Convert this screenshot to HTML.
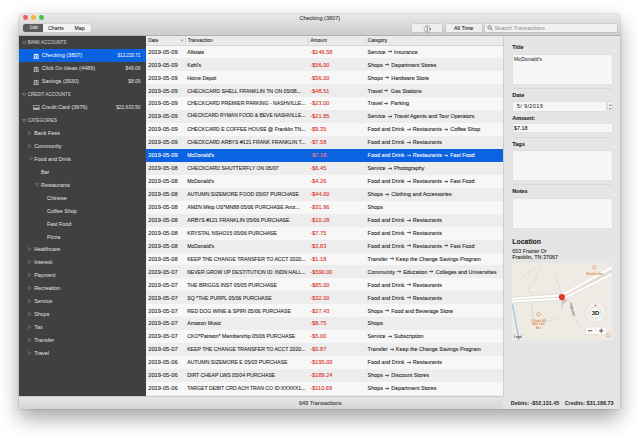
<!DOCTYPE html><html><head><meta charset="utf-8"><style>
*{margin:0;padding:0;box-sizing:border-box}
html,body{width:637px;height:436px;overflow:hidden;background:#fff;font-family:"Liberation Sans",sans-serif}
.tx{position:absolute;white-space:nowrap;line-height:10px;height:10px;-webkit-text-stroke:0.08px currentColor}
.bx{position:absolute}
</style></head><body>
<div class="bx" style="left:19.00px;top:14.00px;width:601.00px;height:394.60px;background:#ececec;border-radius:2.5px 2.5px 1px 1px;box-shadow:0 9px 20px rgba(0,0,0,.36),0 0 1.5px rgba(0,0,0,.35)"></div>
<div class="bx" style="left:19.00px;top:14.00px;width:601.00px;height:21.50px;background:linear-gradient(#e8e8e8,#cdcdcd);border-radius:2.5px 2.5px 0 0;border-bottom:1px solid #b0b0b0"></div>
<div class="bx" style="left:22.90px;top:15.20px;width:4.80px;height:4.80px;background:#ec5f56;border-radius:50%"></div>
<div class="bx" style="left:30.90px;top:15.20px;width:4.80px;height:4.80px;background:#f0b63b;border-radius:50%"></div>
<div class="bx" style="left:39.10px;top:15.20px;width:4.80px;height:4.80px;background:#43c043;border-radius:50%"></div>
<div class="bx" style="left:22.80px;top:23.60px;width:68.20px;height:8.90px;background:#f3f3f3;border-radius:2px;box-shadow:0 0 0 0.5px #c8c8c8"></div>
<div class="bx" style="left:22.80px;top:23.60px;width:20.20px;height:8.90px;background:#5c5c5c;border-radius:2px 0 0 2px"></div>
<div class="tx" style="left:29.90px;top:23.30px;font-size:4.9px;color:#f0f0f0;font-weight:400;">List</div>
<div class="tx" style="left:47.90px;top:23.30px;font-size:5.4px;color:#2a2a2a;font-weight:400;">Charts</div>
<div class="tx" style="left:74.50px;top:23.30px;font-size:5.15px;color:#2a2a2a;font-weight:400;">Map</div>
<div class="tx" style="left:299.40px;top:13.10px;font-size:5.56px;color:#3a3a3a;font-weight:400;">Checking (3807)</div>
<div class="bx" style="left:412.00px;top:24.00px;width:30.40px;height:7.90px;background:#efefef;border-radius:1px;box-shadow:0 0 0 0.4px rgba(0,0,0,.12)"></div>
<svg style="position:absolute;left:423px;top:24.5px" width="9" height="8" viewBox="0 0 9 8"><circle cx="4.2" cy="3.9" r="3.1" fill="none" stroke="#444" stroke-width="0.6" stroke-dasharray="1.2 0.6"/><line x1="4.2" y1="1.5" x2="4.2" y2="6.3" stroke="#444" stroke-width="0.6"/><circle cx="7.2" cy="3.9" r="0.6" fill="#444"/></svg>
<div class="bx" style="left:446.10px;top:24.00px;width:35.80px;height:7.90px;background:#efefef;border-radius:1px;box-shadow:0 0 0 0.4px rgba(0,0,0,.12)"></div>
<div class="tx" style="left:454.00px;top:23.20px;font-size:5.4px;color:#222;font-weight:400;">All Time</div>
<div class="bx" style="left:485.30px;top:24.00px;width:131.70px;height:8.00px;background:#f1f1f1;border-radius:1px;box-shadow:0 0 0 0.4px rgba(0,0,0,.15)"></div>
<div class="tx" style="left:494.40px;top:23.20px;font-size:5.55px;color:#a2a2a2;font-weight:400;">Search Transactions</div>
<svg style="position:absolute;left:486.6px;top:25.4px" width="6" height="6" viewBox="0 0 6 6"><circle cx="2.5" cy="2.4" r="1.65" fill="none" stroke="#444" stroke-width="0.65"/><line x1="3.7" y1="3.6" x2="5.4" y2="5.2" stroke="#444" stroke-width="0.8"/></svg>
<div class="bx" style="left:19.00px;top:35.50px;width:127.00px;height:360.50px;background:#404040;"></div>
<svg style="position:absolute;left:21.6px;top:41.20px" width="4.4" height="3.8" viewBox="0 0 4.4 3.8"><path d="M0.35 0.35 L4.05 0.35 L2.2 3.4 Z" fill="none" stroke="#9a9a9a" stroke-width="0.55"/></svg>
<div class="tx" style="left:27.80px;top:38.20px;font-size:4.45px;color:#c8c8c8;font-weight:400;letter-spacing:0.05px">BANK ACCOUNTS</div>
<div class="bx" style="left:19.00px;top:49.14px;width:127.00px;height:12.70px;background:#0b63e1;"></div>
<svg style="position:absolute;left:32.9px;top:52.74px" width="6.4" height="6" viewBox="0 0 6.4 6"><path d="M0.4 1.9 Q3.2 -0.6 6 1.9 Z" fill="#e8eefc"/><rect x="0.9" y="2.1" width="1.1" height="2.6" fill="#e8eefc"/><rect x="2.65" y="2.1" width="1.1" height="2.6" fill="#e8eefc"/><rect x="4.4" y="2.1" width="1.1" height="2.6" fill="#e8eefc"/><rect x="0.3" y="4.8" width="5.8" height="1" fill="#e8eefc"/></svg>
<div class="tx" style="left:41.80px;top:50.34px;font-size:5.5px;color:#ffffff;font-weight:400;-webkit-text-stroke:0">Checking (3807)</div>
<div class="tx" style="right:496.60px;top:51.04px;font-size:4.6px;color:#ffffff;-webkit-text-stroke:0">$13,220.71</div>
<svg style="position:absolute;left:32.9px;top:65.68px" width="6.4" height="6" viewBox="0 0 6.4 6"><path d="M0.4 1.9 Q3.2 -0.6 6 1.9 Z" fill="#b4b4b4"/><rect x="0.9" y="2.1" width="1.1" height="2.6" fill="#b4b4b4"/><rect x="2.65" y="2.1" width="1.1" height="2.6" fill="#b4b4b4"/><rect x="4.4" y="2.1" width="1.1" height="2.6" fill="#b4b4b4"/><rect x="0.3" y="4.8" width="5.8" height="1" fill="#b4b4b4"/></svg>
<div class="tx" style="left:41.80px;top:63.28px;font-size:5.5px;color:#e2e2e2;font-weight:400;-webkit-text-stroke:0">Click On Ideas (4489)</div>
<div class="tx" style="right:496.60px;top:63.98px;font-size:4.85px;color:#e2e2e2;-webkit-text-stroke:0">$49.06</div>
<svg style="position:absolute;left:32.9px;top:78.62px" width="6.4" height="6" viewBox="0 0 6.4 6"><path d="M0.4 1.9 Q3.2 -0.6 6 1.9 Z" fill="#b4b4b4"/><rect x="0.9" y="2.1" width="1.1" height="2.6" fill="#b4b4b4"/><rect x="2.65" y="2.1" width="1.1" height="2.6" fill="#b4b4b4"/><rect x="4.4" y="2.1" width="1.1" height="2.6" fill="#b4b4b4"/><rect x="0.3" y="4.8" width="5.8" height="1" fill="#b4b4b4"/></svg>
<div class="tx" style="left:41.80px;top:76.22px;font-size:5.5px;color:#e2e2e2;font-weight:400;-webkit-text-stroke:0">Savings (3930)</div>
<div class="tx" style="right:496.60px;top:76.92px;font-size:4.85px;color:#e2e2e2;-webkit-text-stroke:0">$8.09</div>
<svg style="position:absolute;left:21.6px;top:92.96px" width="4.4" height="3.8" viewBox="0 0 4.4 3.8"><path d="M0.35 0.35 L4.05 0.35 L2.2 3.4 Z" fill="none" stroke="#9a9a9a" stroke-width="0.55"/></svg>
<div class="tx" style="left:27.80px;top:89.96px;font-size:4.45px;color:#c8c8c8;font-weight:400;letter-spacing:0.05px">CREDIT ACCOUNTS</div>
<svg style="position:absolute;left:33px;top:104.50px" width="6.5" height="5" viewBox="0 0 6.5 5"><rect x="0.35" y="0.35" width="5.8" height="4.3" fill="none" stroke="#b4b4b4" stroke-width="0.7"/><rect x="0.35" y="2.6" width="5.8" height="2" fill="#b4b4b4"/></svg>
<div class="tx" style="left:41.80px;top:102.10px;font-size:5.5px;color:#e2e2e2;font-weight:400;-webkit-text-stroke:0">Credit Card (3976)</div>
<div class="tx" style="right:496.60px;top:102.80px;font-size:4.85px;color:#e2e2e2;-webkit-text-stroke:0">$22,633.50</div>
<svg style="position:absolute;left:21.6px;top:118.84px" width="4.4" height="3.8" viewBox="0 0 4.4 3.8"><path d="M0.35 0.35 L4.05 0.35 L2.2 3.4 Z" fill="none" stroke="#9a9a9a" stroke-width="0.55"/></svg>
<div class="tx" style="left:27.80px;top:115.84px;font-size:4.45px;color:#c8c8c8;font-weight:400;letter-spacing:0.05px">CATEGORIES</div>
<svg style="position:absolute;left:28.20px;top:130.98px" width="3.5" height="4" viewBox="0 0 3.5 4"><path d="M0.3 0.3 L3.2 2 L0.3 3.7 Z" fill="none" stroke="#8a8a8a" stroke-width="0.5"/></svg>
<div class="tx" style="left:34.20px;top:127.98px;font-size:5.4px;color:#e2e2e2;font-weight:400;-webkit-text-stroke:0">Bank Fees</div>
<svg style="position:absolute;left:28.20px;top:143.92px" width="3.5" height="4" viewBox="0 0 3.5 4"><path d="M0.3 0.3 L3.2 2 L0.3 3.7 Z" fill="none" stroke="#8a8a8a" stroke-width="0.5"/></svg>
<div class="tx" style="left:34.20px;top:140.92px;font-size:5.4px;color:#e2e2e2;font-weight:400;-webkit-text-stroke:0">Community</div>
<svg style="position:absolute;left:28.60px;top:157.26px" width="4" height="3.5" viewBox="0 0 4 3.5"><path d="M0.3 0.3 L3.7 0.3 L2 3.2 Z" fill="none" stroke="#8a8a8a" stroke-width="0.5"/></svg>
<div class="tx" style="left:34.20px;top:153.86px;font-size:5.4px;color:#e2e2e2;font-weight:400;-webkit-text-stroke:0">Food and Drink</div>
<div class="tx" style="left:41.00px;top:166.80px;font-size:5.4px;color:#e2e2e2;font-weight:400;-webkit-text-stroke:0">Bar</div>
<svg style="position:absolute;left:35.40px;top:183.14px" width="4" height="3.5" viewBox="0 0 4 3.5"><path d="M0.3 0.3 L3.7 0.3 L2 3.2 Z" fill="none" stroke="#8a8a8a" stroke-width="0.5"/></svg>
<div class="tx" style="left:41.00px;top:179.74px;font-size:5.4px;color:#e2e2e2;font-weight:400;-webkit-text-stroke:0">Restaurants</div>
<div class="tx" style="left:47.00px;top:192.68px;font-size:5.4px;color:#e2e2e2;font-weight:400;-webkit-text-stroke:0">Chinese</div>
<div class="tx" style="left:47.00px;top:205.62px;font-size:5.4px;color:#e2e2e2;font-weight:400;-webkit-text-stroke:0">Coffee Shop</div>
<div class="tx" style="left:47.00px;top:218.56px;font-size:5.4px;color:#e2e2e2;font-weight:400;-webkit-text-stroke:0">Fast Food</div>
<div class="tx" style="left:47.00px;top:231.50px;font-size:5.4px;color:#e2e2e2;font-weight:400;-webkit-text-stroke:0">Pizza</div>
<svg style="position:absolute;left:28.20px;top:247.44px" width="3.5" height="4" viewBox="0 0 3.5 4"><path d="M0.3 0.3 L3.2 2 L0.3 3.7 Z" fill="none" stroke="#8a8a8a" stroke-width="0.5"/></svg>
<div class="tx" style="left:34.20px;top:244.44px;font-size:5.4px;color:#e2e2e2;font-weight:400;-webkit-text-stroke:0">Healthcare</div>
<svg style="position:absolute;left:28.20px;top:260.38px" width="3.5" height="4" viewBox="0 0 3.5 4"><path d="M0.3 0.3 L3.2 2 L0.3 3.7 Z" fill="none" stroke="#8a8a8a" stroke-width="0.5"/></svg>
<div class="tx" style="left:34.20px;top:257.38px;font-size:5.4px;color:#e2e2e2;font-weight:400;-webkit-text-stroke:0">Interest</div>
<svg style="position:absolute;left:28.20px;top:273.32px" width="3.5" height="4" viewBox="0 0 3.5 4"><path d="M0.3 0.3 L3.2 2 L0.3 3.7 Z" fill="none" stroke="#8a8a8a" stroke-width="0.5"/></svg>
<div class="tx" style="left:34.20px;top:270.32px;font-size:5.4px;color:#e2e2e2;font-weight:400;-webkit-text-stroke:0">Payment</div>
<svg style="position:absolute;left:28.20px;top:286.26px" width="3.5" height="4" viewBox="0 0 3.5 4"><path d="M0.3 0.3 L3.2 2 L0.3 3.7 Z" fill="none" stroke="#8a8a8a" stroke-width="0.5"/></svg>
<div class="tx" style="left:34.20px;top:283.26px;font-size:5.4px;color:#e2e2e2;font-weight:400;-webkit-text-stroke:0">Recreation</div>
<svg style="position:absolute;left:28.20px;top:299.20px" width="3.5" height="4" viewBox="0 0 3.5 4"><path d="M0.3 0.3 L3.2 2 L0.3 3.7 Z" fill="none" stroke="#8a8a8a" stroke-width="0.5"/></svg>
<div class="tx" style="left:34.20px;top:296.20px;font-size:5.4px;color:#e2e2e2;font-weight:400;-webkit-text-stroke:0">Service</div>
<svg style="position:absolute;left:28.20px;top:312.14px" width="3.5" height="4" viewBox="0 0 3.5 4"><path d="M0.3 0.3 L3.2 2 L0.3 3.7 Z" fill="none" stroke="#8a8a8a" stroke-width="0.5"/></svg>
<div class="tx" style="left:34.20px;top:309.14px;font-size:5.4px;color:#e2e2e2;font-weight:400;-webkit-text-stroke:0">Shops</div>
<svg style="position:absolute;left:28.20px;top:325.08px" width="3.5" height="4" viewBox="0 0 3.5 4"><path d="M0.3 0.3 L3.2 2 L0.3 3.7 Z" fill="none" stroke="#8a8a8a" stroke-width="0.5"/></svg>
<div class="tx" style="left:34.20px;top:322.08px;font-size:5.4px;color:#e2e2e2;font-weight:400;-webkit-text-stroke:0">Tax</div>
<svg style="position:absolute;left:28.20px;top:338.02px" width="3.5" height="4" viewBox="0 0 3.5 4"><path d="M0.3 0.3 L3.2 2 L0.3 3.7 Z" fill="none" stroke="#8a8a8a" stroke-width="0.5"/></svg>
<div class="tx" style="left:34.20px;top:335.02px;font-size:5.4px;color:#e2e2e2;font-weight:400;-webkit-text-stroke:0">Transfer</div>
<svg style="position:absolute;left:28.20px;top:350.96px" width="3.5" height="4" viewBox="0 0 3.5 4"><path d="M0.3 0.3 L3.2 2 L0.3 3.7 Z" fill="none" stroke="#8a8a8a" stroke-width="0.5"/></svg>
<div class="tx" style="left:34.20px;top:347.96px;font-size:5.4px;color:#e2e2e2;font-weight:400;-webkit-text-stroke:0">Travel</div>
<div class="bx" style="left:146.00px;top:35.50px;width:357.00px;height:360.50px;background:#f7f7f7;"></div>
<div class="bx" style="left:146.00px;top:35.50px;width:357.00px;height:10.00px;background:#eaeaea;border-bottom:0.6px solid #d6d6d6"></div>
<div class="bx" style="left:185.30px;top:37.00px;width:0.60px;height:7.00px;background:#d2d2d2;"></div>
<div class="bx" style="left:307.90px;top:37.00px;width:0.60px;height:7.00px;background:#d2d2d2;"></div>
<div class="bx" style="left:365.20px;top:37.00px;width:0.60px;height:7.00px;background:#dedede;"></div>
<div class="tx" style="left:148.20px;top:35.50px;font-size:4.8px;color:#2a2a2a;font-weight:400;">Date</div>
<svg style="position:absolute;left:180px;top:39.4px" width="4" height="3" viewBox="0 0 4 3"><path d="M0.4 0.5 L2 2.3 L3.6 0.5" fill="none" stroke="#777" stroke-width="0.6"/></svg>
<div class="tx" style="left:187.70px;top:35.50px;font-size:4.8px;color:#2a2a2a;font-weight:400;">Transaction</div>
<div class="tx" style="left:310.40px;top:35.50px;font-size:4.8px;color:#2a2a2a;font-weight:400;">Amount</div>
<div class="tx" style="left:367.70px;top:35.50px;font-size:4.8px;color:#2a2a2a;font-weight:400;">Category</div>
<div class="tx" style="left:148.20px;top:46.70px;font-size:5.75px;color:#222;font-weight:400;">2019-05-09</div>
<div class="tx" style="left:187.20px;top:46.70px;font-size:5.2px;color:#222;font-weight:400;">Allstate</div>
<div class="tx" style="left:310.40px;top:46.70px;font-size:5.6px;color:#d92b24;font-weight:400;">-$146.58</div>
<div class="tx" style="left:367.60px;top:46.70px;font-size:5.4px;color:#222;font-weight:400;">Service<svg width="4.4" height="3" viewBox="0 0 4.4 3" style="margin:0 1.9px 0 2.1px;vertical-align:0.4px"><path d="M0 1.5H3.7M2.5 0.35L3.85 1.5L2.5 2.65" stroke="currentColor" stroke-width="0.65" fill="none"/></svg>Insurance</div>
<div class="bx" style="left:146.00px;top:58.44px;width:357.00px;height:12.94px;background:#ededed;"></div>
<div class="tx" style="left:148.20px;top:59.64px;font-size:5.75px;color:#222;font-weight:400;">2019-05-09</div>
<div class="tx" style="left:187.20px;top:59.64px;font-size:5.2px;color:#222;font-weight:400;">Kohl's</div>
<div class="tx" style="left:310.40px;top:59.64px;font-size:5.6px;color:#d92b24;font-weight:400;">-$56.00</div>
<div class="tx" style="left:367.60px;top:59.64px;font-size:5.4px;color:#222;font-weight:400;">Shops<svg width="4.4" height="3" viewBox="0 0 4.4 3" style="margin:0 1.9px 0 2.1px;vertical-align:0.4px"><path d="M0 1.5H3.7M2.5 0.35L3.85 1.5L2.5 2.65" stroke="currentColor" stroke-width="0.65" fill="none"/></svg>Department Stores</div>
<div class="tx" style="left:148.20px;top:72.58px;font-size:5.75px;color:#222;font-weight:400;">2019-05-09</div>
<div class="tx" style="left:187.20px;top:72.58px;font-size:5.2px;color:#222;font-weight:400;">Home Depot</div>
<div class="tx" style="left:310.40px;top:72.58px;font-size:5.6px;color:#d92b24;font-weight:400;">-$56.00</div>
<div class="tx" style="left:367.60px;top:72.58px;font-size:5.4px;color:#222;font-weight:400;">Shops<svg width="4.4" height="3" viewBox="0 0 4.4 3" style="margin:0 1.9px 0 2.1px;vertical-align:0.4px"><path d="M0 1.5H3.7M2.5 0.35L3.85 1.5L2.5 2.65" stroke="currentColor" stroke-width="0.65" fill="none"/></svg>Hardware Store</div>
<div class="bx" style="left:146.00px;top:84.32px;width:357.00px;height:12.94px;background:#ededed;"></div>
<div class="tx" style="left:148.20px;top:85.52px;font-size:5.75px;color:#222;font-weight:400;">2019-05-09</div>
<div class="tx" style="left:187.20px;top:85.52px;font-size:5.2px;color:#222;font-weight:400;">CHECKCARD SHELL FRANKLIN TN ON 05/08...</div>
<div class="tx" style="left:310.40px;top:85.52px;font-size:5.6px;color:#d92b24;font-weight:400;">-$48.51</div>
<div class="tx" style="left:367.60px;top:85.52px;font-size:5.4px;color:#222;font-weight:400;">Travel<svg width="4.4" height="3" viewBox="0 0 4.4 3" style="margin:0 1.9px 0 2.1px;vertical-align:0.4px"><path d="M0 1.5H3.7M2.5 0.35L3.85 1.5L2.5 2.65" stroke="currentColor" stroke-width="0.65" fill="none"/></svg>Gas Stations</div>
<div class="tx" style="left:148.20px;top:98.46px;font-size:5.75px;color:#222;font-weight:400;">2019-05-09</div>
<div class="tx" style="left:187.20px;top:98.46px;font-size:5.130536433303026px;color:#222;font-weight:400;">CHECKCARD PREMIER PARKING - NASHVILLE...</div>
<div class="tx" style="left:310.40px;top:98.46px;font-size:5.6px;color:#d92b24;font-weight:400;">-$23.00</div>
<div class="tx" style="left:367.60px;top:98.46px;font-size:5.4px;color:#222;font-weight:400;">Travel<svg width="4.4" height="3" viewBox="0 0 4.4 3" style="margin:0 1.9px 0 2.1px;vertical-align:0.4px"><path d="M0 1.5H3.7M2.5 0.35L3.85 1.5L2.5 2.65" stroke="currentColor" stroke-width="0.65" fill="none"/></svg>Parking</div>
<div class="bx" style="left:146.00px;top:110.20px;width:357.00px;height:12.94px;background:#ededed;"></div>
<div class="tx" style="left:148.20px;top:111.40px;font-size:5.75px;color:#222;font-weight:400;">2019-05-09</div>
<div class="tx" style="left:187.20px;top:111.40px;font-size:4.963142905009214px;color:#222;font-weight:400;">CHECKCARD RYMAN FOOD & BEVE NASHVILLE...</div>
<div class="tx" style="left:310.40px;top:111.40px;font-size:5.6px;color:#d92b24;font-weight:400;">-$21.85</div>
<div class="tx" style="left:367.60px;top:111.40px;font-size:5.4px;color:#222;font-weight:400;">Service<svg width="4.4" height="3" viewBox="0 0 4.4 3" style="margin:0 1.9px 0 2.1px;vertical-align:0.4px"><path d="M0 1.5H3.7M2.5 0.35L3.85 1.5L2.5 2.65" stroke="currentColor" stroke-width="0.65" fill="none"/></svg>Travel Agents and Tour Operators</div>
<div class="tx" style="left:148.20px;top:124.34px;font-size:5.75px;color:#222;font-weight:400;">2019-05-09</div>
<div class="tx" style="left:187.20px;top:124.34px;font-size:5.1521739130434785px;color:#222;font-weight:400;">CHECKCARD E COFFEE HOUSE @ Franklin TN...</div>
<div class="tx" style="left:310.40px;top:124.34px;font-size:5.6px;color:#d92b24;font-weight:400;">-$9.35</div>
<div class="tx" style="left:367.60px;top:124.34px;font-size:5.4px;color:#222;font-weight:400;">Food and Drink<svg width="4.4" height="3" viewBox="0 0 4.4 3" style="margin:0 1.9px 0 2.1px;vertical-align:0.4px"><path d="M0 1.5H3.7M2.5 0.35L3.85 1.5L2.5 2.65" stroke="currentColor" stroke-width="0.65" fill="none"/></svg>Restaurants<svg width="4.4" height="3" viewBox="0 0 4.4 3" style="margin:0 1.9px 0 2.1px;vertical-align:0.4px"><path d="M0 1.5H3.7M2.5 0.35L3.85 1.5L2.5 2.65" stroke="currentColor" stroke-width="0.65" fill="none"/></svg>Coffee Shop</div>
<div class="bx" style="left:146.00px;top:136.08px;width:357.00px;height:12.94px;background:#ededed;"></div>
<div class="tx" style="left:148.20px;top:137.28px;font-size:5.75px;color:#222;font-weight:400;">2019-05-09</div>
<div class="tx" style="left:187.20px;top:137.28px;font-size:5.1672262678236605px;color:#222;font-weight:400;">CHECKCARD ARBYS #121 FRANK FRANKLIN T...</div>
<div class="tx" style="left:310.40px;top:137.28px;font-size:5.6px;color:#d92b24;font-weight:400;">-$7.58</div>
<div class="tx" style="left:367.60px;top:137.28px;font-size:5.4px;color:#222;font-weight:400;">Food and Drink<svg width="4.4" height="3" viewBox="0 0 4.4 3" style="margin:0 1.9px 0 2.1px;vertical-align:0.4px"><path d="M0 1.5H3.7M2.5 0.35L3.85 1.5L2.5 2.65" stroke="currentColor" stroke-width="0.65" fill="none"/></svg>Restaurants</div>
<div class="bx" style="left:146.00px;top:149.02px;width:357.00px;height:12.94px;background:#0b63e1;"></div>
<div class="tx" style="left:148.20px;top:150.22px;font-size:5.75px;color:#fff;font-weight:400;">2019-05-09</div>
<div class="tx" style="left:187.20px;top:150.22px;font-size:5.2px;color:#fff;font-weight:400;">McDonald's</div>
<div class="tx" style="left:310.40px;top:150.22px;font-size:5.6px;color:#ff7a7a;font-weight:400;">-$7.18</div>
<div class="tx" style="left:367.60px;top:150.22px;font-size:5.4px;color:#fff;font-weight:400;">Food and Drink<svg width="4.4" height="3" viewBox="0 0 4.4 3" style="margin:0 1.9px 0 2.1px;vertical-align:0.4px"><path d="M0 1.5H3.7M2.5 0.35L3.85 1.5L2.5 2.65" stroke="currentColor" stroke-width="0.65" fill="none"/></svg>Restaurants<svg width="4.4" height="3" viewBox="0 0 4.4 3" style="margin:0 1.9px 0 2.1px;vertical-align:0.4px"><path d="M0 1.5H3.7M2.5 0.35L3.85 1.5L2.5 2.65" stroke="currentColor" stroke-width="0.65" fill="none"/></svg>Fast Food</div>
<div class="bx" style="left:146.00px;top:161.96px;width:357.00px;height:12.94px;background:#ededed;"></div>
<div class="tx" style="left:148.20px;top:163.16px;font-size:5.75px;color:#222;font-weight:400;">2019-05-08</div>
<div class="tx" style="left:187.20px;top:163.16px;font-size:5.2px;color:#222;font-weight:400;">CHECKCARD SHUTTERFLY ON 05/07</div>
<div class="tx" style="left:310.40px;top:163.16px;font-size:5.6px;color:#d92b24;font-weight:400;">-$6.45</div>
<div class="tx" style="left:367.60px;top:163.16px;font-size:5.4px;color:#222;font-weight:400;">Service<svg width="4.4" height="3" viewBox="0 0 4.4 3" style="margin:0 1.9px 0 2.1px;vertical-align:0.4px"><path d="M0 1.5H3.7M2.5 0.35L3.85 1.5L2.5 2.65" stroke="currentColor" stroke-width="0.65" fill="none"/></svg>Photography</div>
<div class="tx" style="left:148.20px;top:176.10px;font-size:5.75px;color:#222;font-weight:400;">2019-05-08</div>
<div class="tx" style="left:187.20px;top:176.10px;font-size:5.2px;color:#222;font-weight:400;">McDonald's</div>
<div class="tx" style="left:310.40px;top:176.10px;font-size:5.6px;color:#d92b24;font-weight:400;">-$4.26</div>
<div class="tx" style="left:367.60px;top:176.10px;font-size:5.4px;color:#222;font-weight:400;">Food and Drink<svg width="4.4" height="3" viewBox="0 0 4.4 3" style="margin:0 1.9px 0 2.1px;vertical-align:0.4px"><path d="M0 1.5H3.7M2.5 0.35L3.85 1.5L2.5 2.65" stroke="currentColor" stroke-width="0.65" fill="none"/></svg>Restaurants<svg width="4.4" height="3" viewBox="0 0 4.4 3" style="margin:0 1.9px 0 2.1px;vertical-align:0.4px"><path d="M0 1.5H3.7M2.5 0.35L3.85 1.5L2.5 2.65" stroke="currentColor" stroke-width="0.65" fill="none"/></svg>Fast Food</div>
<div class="bx" style="left:146.00px;top:187.84px;width:357.00px;height:12.94px;background:#ededed;"></div>
<div class="tx" style="left:148.20px;top:189.04px;font-size:5.75px;color:#222;font-weight:400;">2019-05-08</div>
<div class="tx" style="left:187.20px;top:189.04px;font-size:5.2px;color:#222;font-weight:400;">AUTUMN SIZEMORE FOOD 05/07 PURCHASE</div>
<div class="tx" style="left:310.40px;top:189.04px;font-size:5.6px;color:#d92b24;font-weight:400;">-$44.00</div>
<div class="tx" style="left:367.60px;top:189.04px;font-size:5.4px;color:#222;font-weight:400;">Shops<svg width="4.4" height="3" viewBox="0 0 4.4 3" style="margin:0 1.9px 0 2.1px;vertical-align:0.4px"><path d="M0 1.5H3.7M2.5 0.35L3.85 1.5L2.5 2.65" stroke="currentColor" stroke-width="0.65" fill="none"/></svg>Clothing and Accessories</div>
<div class="tx" style="left:148.20px;top:201.98px;font-size:5.75px;color:#222;font-weight:400;">2019-05-08</div>
<div class="tx" style="left:187.20px;top:201.98px;font-size:5.2px;color:#222;font-weight:400;">AMZN Mktp US*MN88 05/06 PURCHASE Amz...</div>
<div class="tx" style="left:310.40px;top:201.98px;font-size:5.6px;color:#d92b24;font-weight:400;">-$31.96</div>
<div class="tx" style="left:367.60px;top:201.98px;font-size:5.4px;color:#222;font-weight:400;">Shops</div>
<div class="bx" style="left:146.00px;top:213.72px;width:357.00px;height:12.94px;background:#ededed;"></div>
<div class="tx" style="left:148.20px;top:214.92px;font-size:5.75px;color:#222;font-weight:400;">2019-05-08</div>
<div class="tx" style="left:187.20px;top:214.92px;font-size:5.2px;color:#222;font-weight:400;">ARBYS #121 FRANKLIN 05/06 PURCHASE</div>
<div class="tx" style="left:310.40px;top:214.92px;font-size:5.6px;color:#d92b24;font-weight:400;">-$10.28</div>
<div class="tx" style="left:367.60px;top:214.92px;font-size:5.4px;color:#222;font-weight:400;">Food and Drink<svg width="4.4" height="3" viewBox="0 0 4.4 3" style="margin:0 1.9px 0 2.1px;vertical-align:0.4px"><path d="M0 1.5H3.7M2.5 0.35L3.85 1.5L2.5 2.65" stroke="currentColor" stroke-width="0.65" fill="none"/></svg>Restaurants</div>
<div class="tx" style="left:148.20px;top:227.86px;font-size:5.75px;color:#222;font-weight:400;">2019-05-08</div>
<div class="tx" style="left:187.20px;top:227.86px;font-size:5.2px;color:#222;font-weight:400;">KRYSTAL NSHO15 05/06 PURCHASE</div>
<div class="tx" style="left:310.40px;top:227.86px;font-size:5.6px;color:#d92b24;font-weight:400;">-$7.75</div>
<div class="tx" style="left:367.60px;top:227.86px;font-size:5.4px;color:#222;font-weight:400;">Food and Drink<svg width="4.4" height="3" viewBox="0 0 4.4 3" style="margin:0 1.9px 0 2.1px;vertical-align:0.4px"><path d="M0 1.5H3.7M2.5 0.35L3.85 1.5L2.5 2.65" stroke="currentColor" stroke-width="0.65" fill="none"/></svg>Restaurants</div>
<div class="bx" style="left:146.00px;top:239.60px;width:357.00px;height:12.94px;background:#ededed;"></div>
<div class="tx" style="left:148.20px;top:240.80px;font-size:5.75px;color:#222;font-weight:400;">2019-05-08</div>
<div class="tx" style="left:187.20px;top:240.80px;font-size:5.2px;color:#222;font-weight:400;">McDonald's</div>
<div class="tx" style="left:310.40px;top:240.80px;font-size:5.6px;color:#d92b24;font-weight:400;">-$3.83</div>
<div class="tx" style="left:367.60px;top:240.80px;font-size:5.4px;color:#222;font-weight:400;">Food and Drink<svg width="4.4" height="3" viewBox="0 0 4.4 3" style="margin:0 1.9px 0 2.1px;vertical-align:0.4px"><path d="M0 1.5H3.7M2.5 0.35L3.85 1.5L2.5 2.65" stroke="currentColor" stroke-width="0.65" fill="none"/></svg>Restaurants<svg width="4.4" height="3" viewBox="0 0 4.4 3" style="margin:0 1.9px 0 2.1px;vertical-align:0.4px"><path d="M0 1.5H3.7M2.5 0.35L3.85 1.5L2.5 2.65" stroke="currentColor" stroke-width="0.65" fill="none"/></svg>Fast Food</div>
<div class="tx" style="left:148.20px;top:253.74px;font-size:5.75px;color:#222;font-weight:400;">2019-05-08</div>
<div class="tx" style="left:187.20px;top:253.74px;font-size:5.15038247566064px;color:#222;font-weight:400;">KEEP THE CHANGE TRANSFER TO ACCT 2020...</div>
<div class="tx" style="left:310.40px;top:253.74px;font-size:5.6px;color:#d92b24;font-weight:400;">-$1.18</div>
<div class="tx" style="left:367.60px;top:253.74px;font-size:5.4px;color:#222;font-weight:400;">Transfer<svg width="4.4" height="3" viewBox="0 0 4.4 3" style="margin:0 1.9px 0 2.1px;vertical-align:0.4px"><path d="M0 1.5H3.7M2.5 0.35L3.85 1.5L2.5 2.65" stroke="currentColor" stroke-width="0.65" fill="none"/></svg>Keep the Change Savings Program</div>
<div class="bx" style="left:146.00px;top:265.48px;width:357.00px;height:12.94px;background:#ededed;"></div>
<div class="tx" style="left:148.20px;top:266.68px;font-size:5.75px;color:#222;font-weight:400;">2019-05-07</div>
<div class="tx" style="left:187.20px;top:266.68px;font-size:5.057834307909002px;color:#222;font-weight:400;">NEVER GROW UP DESTITUTION ID: INDN:HALL...</div>
<div class="tx" style="left:310.40px;top:266.68px;font-size:5.6px;color:#d92b24;font-weight:400;">-$590.00</div>
<div class="tx" style="left:367.60px;top:266.68px;font-size:5.4px;color:#222;font-weight:400;">Community<svg width="4.4" height="3" viewBox="0 0 4.4 3" style="margin:0 1.9px 0 2.1px;vertical-align:0.4px"><path d="M0 1.5H3.7M2.5 0.35L3.85 1.5L2.5 2.65" stroke="currentColor" stroke-width="0.65" fill="none"/></svg>Education<svg width="4.4" height="3" viewBox="0 0 4.4 3" style="margin:0 1.9px 0 2.1px;vertical-align:0.4px"><path d="M0 1.5H3.7M2.5 0.35L3.85 1.5L2.5 2.65" stroke="currentColor" stroke-width="0.65" fill="none"/></svg>Colleges and Universities</div>
<div class="tx" style="left:148.20px;top:279.62px;font-size:5.75px;color:#222;font-weight:400;">2019-05-07</div>
<div class="tx" style="left:187.20px;top:279.62px;font-size:5.2px;color:#222;font-weight:400;">THE BRIGGS INST 05/05 PURCHASE</div>
<div class="tx" style="left:310.40px;top:279.62px;font-size:5.6px;color:#d92b24;font-weight:400;">-$85.00</div>
<div class="tx" style="left:367.60px;top:279.62px;font-size:5.4px;color:#222;font-weight:400;">Food and Drink<svg width="4.4" height="3" viewBox="0 0 4.4 3" style="margin:0 1.9px 0 2.1px;vertical-align:0.4px"><path d="M0 1.5H3.7M2.5 0.35L3.85 1.5L2.5 2.65" stroke="currentColor" stroke-width="0.65" fill="none"/></svg>Restaurants</div>
<div class="bx" style="left:146.00px;top:291.36px;width:357.00px;height:12.94px;background:#ededed;"></div>
<div class="tx" style="left:148.20px;top:292.56px;font-size:5.75px;color:#222;font-weight:400;">2019-05-07</div>
<div class="tx" style="left:187.20px;top:292.56px;font-size:5.2px;color:#222;font-weight:400;">SQ *THE PURPL 05/06 PURCHASE</div>
<div class="tx" style="left:310.40px;top:292.56px;font-size:5.6px;color:#d92b24;font-weight:400;">-$32.00</div>
<div class="tx" style="left:367.60px;top:292.56px;font-size:5.4px;color:#222;font-weight:400;">Food and Drink<svg width="4.4" height="3" viewBox="0 0 4.4 3" style="margin:0 1.9px 0 2.1px;vertical-align:0.4px"><path d="M0 1.5H3.7M2.5 0.35L3.85 1.5L2.5 2.65" stroke="currentColor" stroke-width="0.65" fill="none"/></svg>Restaurants</div>
<div class="tx" style="left:148.20px;top:305.50px;font-size:5.75px;color:#222;font-weight:400;">2019-05-07</div>
<div class="tx" style="left:187.20px;top:305.50px;font-size:5.2px;color:#222;font-weight:400;">RED DOG WINE & SPIRI 05/06 PURCHASE</div>
<div class="tx" style="left:310.40px;top:305.50px;font-size:5.6px;color:#d92b24;font-weight:400;">-$27.43</div>
<div class="tx" style="left:367.60px;top:305.50px;font-size:5.4px;color:#222;font-weight:400;">Shops<svg width="4.4" height="3" viewBox="0 0 4.4 3" style="margin:0 1.9px 0 2.1px;vertical-align:0.4px"><path d="M0 1.5H3.7M2.5 0.35L3.85 1.5L2.5 2.65" stroke="currentColor" stroke-width="0.65" fill="none"/></svg>Food and Beverage Store</div>
<div class="bx" style="left:146.00px;top:317.24px;width:357.00px;height:12.94px;background:#ededed;"></div>
<div class="tx" style="left:148.20px;top:318.44px;font-size:5.75px;color:#222;font-weight:400;">2019-05-07</div>
<div class="tx" style="left:187.20px;top:318.44px;font-size:5.2px;color:#222;font-weight:400;">Amazon Music</div>
<div class="tx" style="left:310.40px;top:318.44px;font-size:5.6px;color:#d92b24;font-weight:400;">-$8.75</div>
<div class="tx" style="left:367.60px;top:318.44px;font-size:5.4px;color:#222;font-weight:400;">Shops</div>
<div class="tx" style="left:148.20px;top:331.38px;font-size:5.75px;color:#222;font-weight:400;">2019-05-07</div>
<div class="tx" style="left:187.20px;top:331.38px;font-size:5.2px;color:#222;font-weight:400;">CKO*Patreon* Membership 05/06 PURCHASE</div>
<div class="tx" style="left:310.40px;top:331.38px;font-size:5.6px;color:#d92b24;font-weight:400;">-$5.00</div>
<div class="tx" style="left:367.60px;top:331.38px;font-size:5.4px;color:#222;font-weight:400;">Service<svg width="4.4" height="3" viewBox="0 0 4.4 3" style="margin:0 1.9px 0 2.1px;vertical-align:0.4px"><path d="M0 1.5H3.7M2.5 0.35L3.85 1.5L2.5 2.65" stroke="currentColor" stroke-width="0.65" fill="none"/></svg>Subscription</div>
<div class="bx" style="left:146.00px;top:343.12px;width:357.00px;height:12.94px;background:#ededed;"></div>
<div class="tx" style="left:148.20px;top:344.32px;font-size:5.75px;color:#222;font-weight:400;">2019-05-07</div>
<div class="tx" style="left:187.20px;top:344.32px;font-size:5.15038247566064px;color:#222;font-weight:400;">KEEP THE CHANGE TRANSFER TO ACCT 2020...</div>
<div class="tx" style="left:310.40px;top:344.32px;font-size:5.6px;color:#d92b24;font-weight:400;">-$0.87</div>
<div class="tx" style="left:367.60px;top:344.32px;font-size:5.4px;color:#222;font-weight:400;">Transfer<svg width="4.4" height="3" viewBox="0 0 4.4 3" style="margin:0 1.9px 0 2.1px;vertical-align:0.4px"><path d="M0 1.5H3.7M2.5 0.35L3.85 1.5L2.5 2.65" stroke="currentColor" stroke-width="0.65" fill="none"/></svg>Keep the Change Savings Program</div>
<div class="tx" style="left:148.20px;top:357.26px;font-size:5.75px;color:#222;font-weight:400;">2019-05-06</div>
<div class="tx" style="left:187.20px;top:357.26px;font-size:5.2px;color:#222;font-weight:400;">AUTUMN SIZEMORE E 05/03 PURCHASE</div>
<div class="tx" style="left:310.40px;top:357.26px;font-size:5.6px;color:#d92b24;font-weight:400;">-$195.00</div>
<div class="tx" style="left:367.60px;top:357.26px;font-size:5.4px;color:#222;font-weight:400;">Food and Drink<svg width="4.4" height="3" viewBox="0 0 4.4 3" style="margin:0 1.9px 0 2.1px;vertical-align:0.4px"><path d="M0 1.5H3.7M2.5 0.35L3.85 1.5L2.5 2.65" stroke="currentColor" stroke-width="0.65" fill="none"/></svg>Restaurants</div>
<div class="bx" style="left:146.00px;top:369.00px;width:357.00px;height:12.94px;background:#ededed;"></div>
<div class="tx" style="left:148.20px;top:370.20px;font-size:5.75px;color:#222;font-weight:400;">2019-05-06</div>
<div class="tx" style="left:187.20px;top:370.20px;font-size:5.2px;color:#222;font-weight:400;">DIRT CHEAP LWS 05/04 PURCHASE</div>
<div class="tx" style="left:310.40px;top:370.20px;font-size:5.6px;color:#d92b24;font-weight:400;">-$189.24</div>
<div class="tx" style="left:367.60px;top:370.20px;font-size:5.4px;color:#222;font-weight:400;">Shops<svg width="4.4" height="3" viewBox="0 0 4.4 3" style="margin:0 1.9px 0 2.1px;vertical-align:0.4px"><path d="M0 1.5H3.7M2.5 0.35L3.85 1.5L2.5 2.65" stroke="currentColor" stroke-width="0.65" fill="none"/></svg>Discount Stores</div>
<div class="tx" style="left:148.20px;top:383.14px;font-size:5.75px;color:#222;font-weight:400;">2019-05-06</div>
<div class="tx" style="left:187.20px;top:383.14px;font-size:5.155311929000261px;color:#222;font-weight:400;">TARGET DEBIT CRD ACH TRAN CO ID:XXXXX1...</div>
<div class="tx" style="left:310.40px;top:383.14px;font-size:5.6px;color:#d92b24;font-weight:400;">-$110.69</div>
<div class="tx" style="left:367.60px;top:383.14px;font-size:5.4px;color:#222;font-weight:400;">Shops<svg width="4.4" height="3" viewBox="0 0 4.4 3" style="margin:0 1.9px 0 2.1px;vertical-align:0.4px"><path d="M0 1.5H3.7M2.5 0.35L3.85 1.5L2.5 2.65" stroke="currentColor" stroke-width="0.65" fill="none"/></svg>Department Stores</div>
<div class="bx" style="left:146.00px;top:394.88px;width:357.00px;height:1.12px;background:#ededed;"></div>
<div class="tx" style="left:148.20px;top:396.08px;font-size:5.75px;color:#222;font-weight:400;">2019-05-06</div>
<div class="tx" style="left:187.20px;top:396.08px;font-size:5.2px;color:#222;font-weight:400;"></div>
<div class="tx" style="left:310.40px;top:396.08px;font-size:5.6px;color:#d92b24;font-weight:400;"></div>
<div class="tx" style="left:367.60px;top:396.08px;font-size:5.4px;color:#222;font-weight:400;"></div>
<div class="bx" style="left:503.00px;top:35.50px;width:117.00px;height:360.50px;background:#e5e5e5;border-left:0.8px solid #cdcdcd"></div>
<div class="tx" style="left:512.20px;top:42.30px;font-size:5.6px;color:#222;font-weight:700;">Title</div>
<div class="bx" style="left:512.50px;top:54.50px;width:99.70px;height:29.80px;background:#f6f6f6;box-shadow:0 0 0 0.4px #d6d6d6"></div>
<div class="tx" style="left:514.00px;top:53.50px;font-size:5.4px;color:#222;font-weight:400;-webkit-text-stroke:0">McDonald's</div>
<div class="bx" style="left:512.50px;top:88.20px;width:99.70px;height:0.80px;background:#d9d9d9;"></div>
<div class="tx" style="left:512.20px;top:90.10px;font-size:5.6px;color:#222;font-weight:700;">Date</div>
<div class="bx" style="left:512.50px;top:102.30px;width:93.50px;height:8.30px;background:#f6f6f6;box-shadow:0 0 0 0.4px #d6d6d6"></div>
<div class="tx" style="left:516.70px;top:101.40px;font-size:5.6px;color:#222;font-weight:400;letter-spacing:0.35px;-webkit-text-stroke:0">5/ 9/2019</div>
<div class="bx" style="left:607.80px;top:102.30px;width:4.70px;height:8.50px;background:#f4f4f4;border-radius:1px;box-shadow:0 0 0 0.4px #ccc"></div>
<svg style="position:absolute;left:608px;top:102.6px" width="4.5" height="8" viewBox="0 0 4.5 8"><path d="M1 3 L2.25 1.6 L3.5 3 M1 5 L2.25 6.4 L3.5 5" stroke="#333" stroke-width="0.6" fill="none"/></svg>
<div class="tx" style="left:512.20px;top:112.70px;font-size:5.6px;color:#222;font-weight:700;">Amount:</div>
<div class="bx" style="left:512.50px;top:124.30px;width:99.70px;height:8.00px;background:#f6f6f6;box-shadow:0 0 0 0.4px #d6d6d6"></div>
<div class="tx" style="left:514.00px;top:123.30px;font-size:5.4px;color:#222;font-weight:400;">$7.18</div>
<div class="bx" style="left:512.50px;top:136.50px;width:99.70px;height:0.80px;background:#d9d9d9;"></div>
<div class="tx" style="left:512.20px;top:138.50px;font-size:5.6px;color:#222;font-weight:700;">Tags</div>
<div class="bx" style="left:512.50px;top:150.50px;width:99.70px;height:29.80px;background:#f6f6f6;box-shadow:0 0 0 0.4px #d6d6d6"></div>
<div class="bx" style="left:512.50px;top:184.40px;width:99.70px;height:0.80px;background:#d9d9d9;"></div>
<div class="tx" style="left:512.20px;top:186.20px;font-size:5.6px;color:#222;font-weight:700;">Notes</div>
<div class="bx" style="left:512.50px;top:198.50px;width:99.70px;height:29.60px;background:#f6f6f6;box-shadow:0 0 0 0.4px #d6d6d6"></div>
<div class="tx" style="left:512.20px;top:236.50px;font-size:6.95px;color:#222;font-weight:700;">Location</div>
<div class="tx" style="left:512.20px;top:245.80px;font-size:5.4px;color:#333;font-weight:400;">653 Frazier Dr</div>
<div class="tx" style="left:512.20px;top:252.00px;font-size:5.4px;color:#222;font-weight:400;">Franklin, TN 37067</div>
<svg style="position:absolute;left:511.9px;top:263px" width="100.4" height="77" viewBox="0 0 100.4 77">
<rect width="100.4" height="77" fill="#eeebe4"/>
<path d="M30.3 2.7 Q24 12 22 19.5 Q18 24 15.5 27.8 Q17 29.5 20.1 30 L20.1 54 Q24 58 32 58.5 Q44 58 50 53" stroke="#d2cec5" stroke-width="0.55" fill="none"/>
<path d="M10 14 Q18 8 24 4" stroke="#d2cec5" stroke-width="0.5" fill="none"/>
<path d="M43.4 10.8 L50 34 L59.9 40.2 Q61 50 66 60 Q72 70 86 73" stroke="#cfcbc2" stroke-width="0.55" fill="none"/>
<path d="M0 37 L50.5 33.9 L100.4 7.5" stroke="#e3dfd6" stroke-width="7.2" fill="none"/>
<path d="M0 35.7 L49.9 32.2 L100.4 4.3" stroke="#ffffff" stroke-width="2" fill="none"/>
<path d="M0 38.4 L51 35.6 L100.4 10.8" stroke="#ffffff" stroke-width="2" fill="none"/>
<path d="M0.5 41.5 Q3.5 58 7.2 77" stroke="#9ec4e8" stroke-width="1.3" fill="none"/>
<path d="M50 35 L55.5 37.5 L51 42 Z" fill="#c6c4c1"/>
<path d="M50 36 L50 46" stroke="#b3b3b3" stroke-width="0.6"/>
<circle cx="49.9" cy="34.1" r="3.1" fill="#e8342b"/>
<circle cx="82.2" cy="4.4" r="1.8" fill="none" stroke="#ea9450" stroke-width="0.7"/>
<circle cx="26.5" cy="51.3" r="1.8" fill="none" stroke="#ea9450" stroke-width="0.7"/>
<circle cx="96.3" cy="72.4" r="1.8" fill="none" stroke="#ea9450" stroke-width="0.7"/>
<circle cx="83.5" cy="49.5" r="10" fill="#f3f2ef" stroke="#dcdad5" stroke-width="0.5"/>
<circle cx="83.5" cy="49.5" r="5.6" fill="#fbfbfb" stroke="#b9b6b0" stroke-width="0.5"/>
<path d="M83.5 41.3 L84.4 43 L82.6 43 Z" fill="#e33"/>
<path d="M83.5 57.8 V58.8 M75.2 49.5 H76.2 M90.8 49.5 H91.8" stroke="#bbb" stroke-width="0.4"/>
<rect x="73.4" y="64.1" width="21" height="7.4" rx="0.8" fill="#fafafa" stroke="#d3d0ca" stroke-width="0.4"/>
<line x1="83.8" y1="64.1" x2="83.8" y2="71.5" stroke="#d3d0ca" stroke-width="0.4"/>
<line x1="76" y1="67.8" x2="80.4" y2="67.8" stroke="#444" stroke-width="0.9"/>
<line x1="87" y1="67.8" x2="91.4" y2="67.8" stroke="#444" stroke-width="0.9"/>
<line x1="89.2" y1="65.6" x2="89.2" y2="70" stroke="#444" stroke-width="0.9"/>
</svg>
<div class="tx" style="left:589.6px;top:308.2px;width:12px;text-align:center;font-size:6px;color:#222;font-weight:700;-webkit-text-stroke:0">3D</div>
<div class="tx" style="left:584.4px;top:268.9px;width:20px;text-align:center;font-size:3.8px;color:#de8a44">Starbucks</div>
<div class="tx" style="left:528.4px;top:315.7px;width:20px;text-align:center;font-size:3.4px;color:#de8a44">Chuy's Mi</div>
<div class="tx" style="left:528.4px;top:319.4px;width:20px;text-align:center;font-size:3.4px;color:#de8a44">Mex Lan</div>
<div class="tx" style="left:528.4px;top:322.7px;width:20px;text-align:center;font-size:3.4px;color:#de8a44">Bar</div>
<div class="tx" style="left:571.3px;top:298px;font-size:3px;color:#666;transform:rotate(78deg);transform-origin:0 50%">Legacy Dr</div>
<div class="tx" style="left:514.00px;top:332.20px;font-size:3.2px;color:#555;font-weight:400;">Legal</div>
<div class="bx" style="left:19.00px;top:396.00px;width:601.00px;height:12.60px;background:linear-gradient(#e6e6e6,#d6d6d6);border-top:0.6px solid #c9c9c9"></div>
<div class="bx" style="left:503.00px;top:396.00px;width:117.00px;height:12.60px;background:#e3e3e3;"></div>
<div class="tx" style="left:298.90px;top:397.60px;font-size:5.6px;color:#333;font-weight:400;">649 Transactions</div>
<div class="tx" style="left:510.80px;top:398.00px;font-size:5.4px;color:#2a2a2a;font-weight:700;-webkit-text-stroke:0">Debits: -$52,131.45</div>
<div class="tx" style="left:564.70px;top:398.00px;font-size:5.4px;color:#2a2a2a;font-weight:700;-webkit-text-stroke:0">Credits: $31,188.73</div>
</body></html>
